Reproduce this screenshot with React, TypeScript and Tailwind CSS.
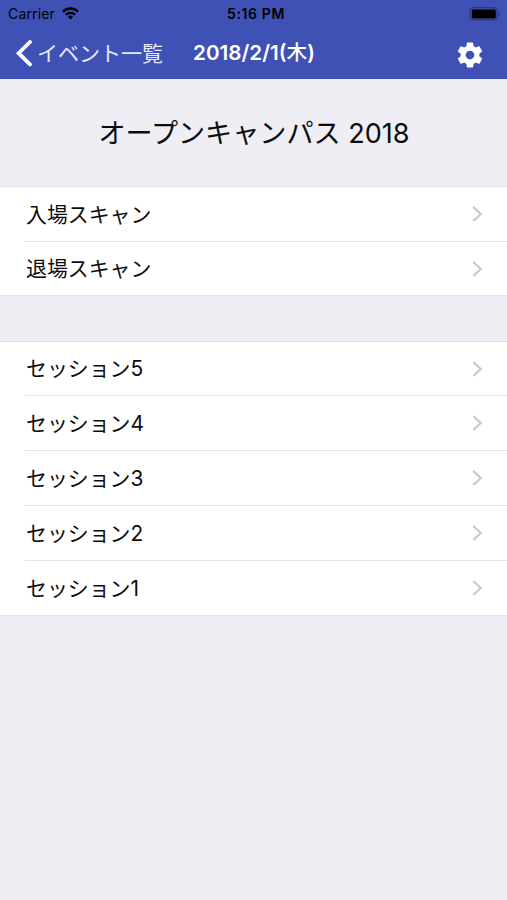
import React from 'react';

interface ListSectionProps {
  items: string[];
  firstRow: string;
  nextRow: string;
}

const scans = ['入場スキャン', '退場スキャン'];
const sessions = ['セッション5', 'セッション4', 'セッション3', 'セッション2', 'セッション1'];

const GearIcon: React.FC = () => (
  <svg width="30" height="30" viewBox="0 0 24 24" fill="currentColor">
    <path d="M19.43 12.98c.04-.32.07-.64.07-.98s-.03-.66-.07-.98l2.11-1.65c.19-.15.24-.42.12-.64l-2-3.46c-.12-.22-.39-.3-.61-.22l-2.49 1c-.52-.4-1.08-.73-1.69-.98l-.38-2.65C14.46 2.18 14.25 2 14 2h-4c-.25 0-.46.18-.49.42l-.38 2.65c-.61.25-1.17.59-1.69.98l-2.49-1c-.23-.09-.49 0-.61.22l-2 3.46c-.13.22-.07.49.12.64l2.11 1.65c-.04.32-.07.65-.07.98s.03.66.07.98l-2.11 1.65c-.19.15-.24.42-.12.64l2 3.46c.12.22.39.3.61.22l2.49-1c.52.4 1.08.73 1.69.98l.38 2.65c.03.24.24.42.49.42h4c.25 0 .46-.18.49-.42l.38-2.65c.61-.25 1.17-.59 1.69-.98l2.49 1c.23.09.49 0 .61-.22l2-3.46c.12-.22.07-.49-.12-.64l-2.11-1.65zM12 15.5c-1.93 0-3.5-1.57-3.5-3.5s1.57-3.5 3.5-3.5 3.5 1.57 3.5 3.5-1.57 3.5-3.5 3.5z" />
  </svg>
);

const StatusBar: React.FC = () => (
  <div className="grid h-[27px] grid-cols-3 items-center pl-[8px] pr-[6px] text-black">
    <div className="flex items-center gap-[7px]">
      <span className="text-[14px] leading-none tracking-[0.15px]">Carrier</span>
      <svg width="17" height="13" viewBox="0 0 17 13" fill="none" stroke="currentColor" strokeWidth="2.3">
        <path d="M1 4.6a10.6 10.6 0 0 1 15 0" />
        <path d="M3.9 7.7a6.5 6.5 0 0 1 9.2 0" />
        <path d="M8.5 12.4 5.9 9.8a3.7 3.7 0 0 1 5.2 0z" fill="currentColor" stroke="none" />
      </svg>
    </div>
    <span className="pl-[3px] pt-px text-center text-[14px] font-semibold leading-none tracking-[0.6px]">5:16 PM</span>
    <svg className="justify-self-end" width="32" height="14" viewBox="0 0 32 14">
      <rect x="1" y="0.8" width="27.2" height="12.2" rx="3" fill="none" stroke="#000" strokeOpacity="0.4" />
      <rect x="2.8" y="2.5" width="24" height="9" rx="1.4" fill="#000" />
      <path d="M29.6 4.8c1.8.8 1.8 3.6 0 4.4z" fill="#000" fillOpacity="0.4" />
    </svg>
  </div>
);

const NavBar: React.FC = () => (
  <div className="flex h-[52px] items-center pl-[15px] pr-[22px] text-white">
    <button className="flex items-center gap-[4px]">
      <svg width="18" height="27" viewBox="0 0 18 27" fill="none" stroke="currentColor" strokeWidth="3.8" strokeLinecap="round" strokeLinejoin="miter">
        <path d="M15 2 3.6 13.2 15 24.4" />
      </svg>
      <span className="whitespace-nowrap text-[21px] leading-none text-[#e8eaf8]">イベント一覧</span>
    </button>
    <h1 className="ml-[30px] whitespace-nowrap text-[20.7px] font-semibold leading-none">
      2018/2/1(<span className="font-medium">木</span>)
    </h1>
    <button className="ml-auto mt-[3px]">
      <GearIcon />
    </button>
  </div>
);

const ListSection: React.FC<ListSectionProps> = ({ items, firstRow, nextRow }) => (
  <ul className="border-y border-[#e2e2e5] bg-white pl-[25px]">
    {items.map((item, i) => (
      <li
        key={item}
        className={`flex items-center justify-between pr-[24px] ${i > 0 ? `${nextRow} border-t border-[#e6e6e8]` : firstRow}`}
      >
        <span className="pl-px pt-[2px] text-[20.9px] leading-none">{item}</span>
        <svg width="11" height="16" viewBox="0 0 11 16" fill="none" stroke="#c7c7cc" strokeWidth="2.1">
          <path d="M1.3 1 8.8 8l-7.5 7" />
        </svg>
      </li>
    ))}
  </ul>
);

const App: React.FC = () => {
  return (
    <div className="min-h-screen bg-[#efeef4] font-['Inter','Noto_Sans_CJK_JP',sans-serif] text-[#0c0c0c]">
      <header className="h-[79px] bg-[#3f51b5]">
        <StatusBar />
        <NavBar />
      </header>
      <h2 className="flex h-[107px] items-center justify-center whitespace-nowrap pl-px pt-[2px] text-[27.1px] leading-none">
        オープンキャンパス 2018
      </h2>
      <ListSection items={scans} firstRow="h-[54px]" nextRow="h-[54px]" />
      <div className="h-[45px]" />
      <ListSection items={sessions} firstRow="h-[53px]" nextRow="h-[55px]" />
    </div>
  );
};

export default App;
